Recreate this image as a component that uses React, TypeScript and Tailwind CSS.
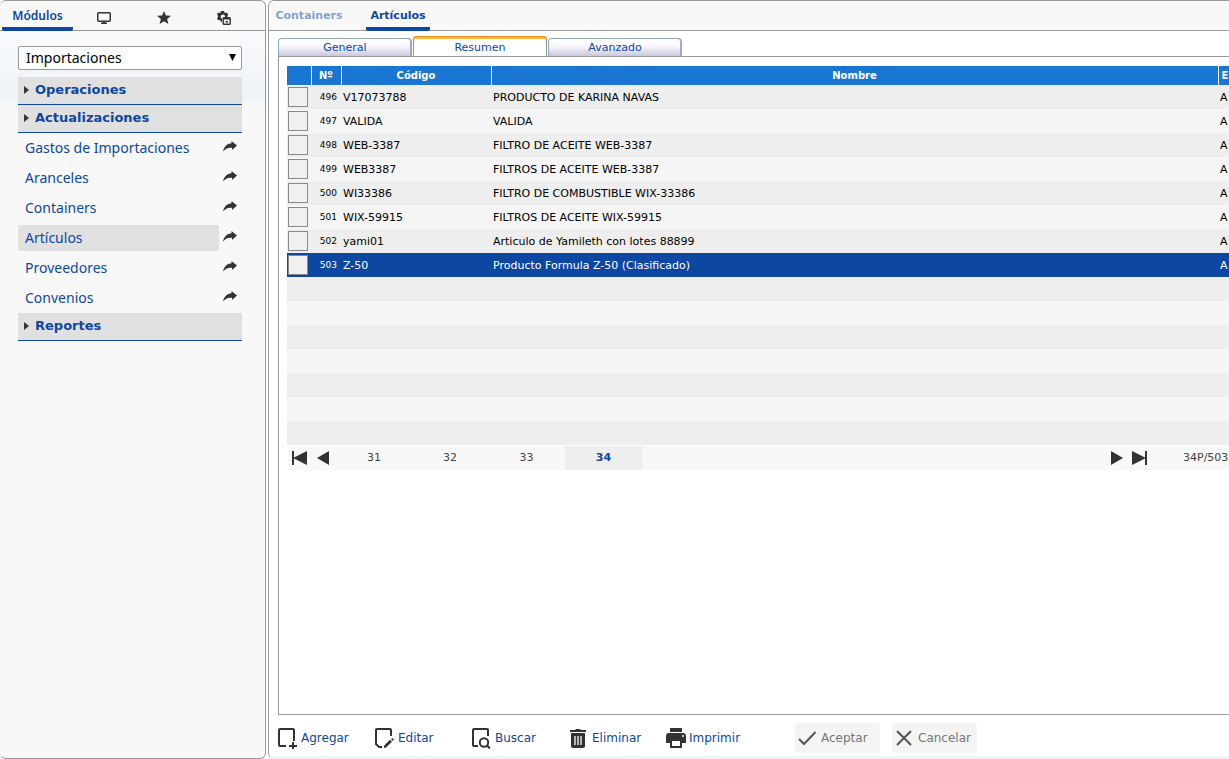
import React from "react";

const rows = [
  ["496", "V17073788", "PRODUCTO DE KARINA NAVAS"],
  ["497", "VALIDA", "VALIDA"],
  ["498", "WEB-3387", "FILTRO DE ACEITE WEB-3387"],
  ["499", "WEB3387", "FILTROS DE ACEITE WEB-3387"],
  ["500", "WI33386", "FILTRO DE COMBUSTIBLE WIX-33386"],
  ["501", "WIX-59915", "FILTROS DE ACEITE WIX-59915"],
  ["502", "yami01", "Articulo de Yamileth con lotes 88899"],
  ["503", "Z-50", "Producto Formula Z-50 (Clasificado)"],
];

const emptyRows = [0, 1, 2, 3, 4, 5, 6];

const links = ["Gastos de Importaciones", "Aranceles", "Containers", "Artículos", "Proveedores", "Convenios"];

function MonitorIcon() {
  return (
    <svg width="14" height="12" viewBox="0 0 14 12" aria-hidden="true">
      <rect x="0.75" y="0.75" width="12.5" height="8.5" rx="1" fill="none" stroke="#333" strokeWidth="1.5" />
      <path d="M6 9h2v1.5h2V12H4v-1.5h2z" fill="#333" />
    </svg>
  );
}

function StarIcon() {
  return (
    <svg width="14" height="13" viewBox="0 0 14 13" aria-hidden="true">
      <path d="M7 0l1.9 4.5L14 4.8 10.100 8 11.400 13 7 10.200 2.600 13 3.900 8 0 4.800l5.100-.3z" fill="#333" />
    </svg>
  );
}

function GearWindowIcon() {
  return (
    <svg width="14" height="14" viewBox="0 0 14 14" aria-hidden="true">
      <path
        fill="#333"
        fillRule="evenodd"
        d="M4 0h3l.4 1.5 1 .5 1.5-.5 1.4 2.4-.9 1v1H8V5.2A2.2 2.2 0 1 0 5 7.7V11H4l-.4-1.6-1-.5-1.5.4L0 7l1-1.1V4.8L0 3.8l1.1-2.3 1.5.5 1-.5z"
      />
      <rect x="6.2" y="6.7" width="7" height="6.500" rx="0.8" fill="#f8f8f8" stroke="#333" strokeWidth="1.4" />
      <path d="M6 6.500h7v2H6z" fill="#333" />
      <path d="M8.500 10h2.500v1.500H8.500z" fill="#333" />
    </svg>
  );
}

function ShareArrow() {
  return (
    <svg width="14" height="11" viewBox="0 0 14 11" aria-hidden="true">
      <path d="M8.500 0L14 4.500 9 9V6.800C5 6.300 2.500 7.500 0 10.500 1 5.500 4.500 2.500 8.500 2.300z" fill="#333" />
    </svg>
  );
}

function AddIcon() {
  return (
    <svg width="20" height="22" viewBox="0 0 20 22" fill="none" stroke="#333" strokeWidth="2" aria-hidden="true">
      <path d="M8 19H2a1 1 0 0 1-1-1V3a1 1 0 0 1 1-1h13a1 1 0 0 1 1 1v11M15 15v7M11 19h8" />
    </svg>
  );
}

function EditIcon() {
  return (
    <svg width="20" height="22" viewBox="0 0 20 22" fill="none" stroke="#333" strokeWidth="2" aria-hidden="true">
      <path d="M16 9V3a1 1 0 0 0-1-1H2a1 1 0 0 0-1 1v14l3 3h3" />
      <path d="M9 18.800L15 12.800l2 2L11 20.500 9 21z" fill="#333" stroke="none" />
      <path d="M16 12l1.200-1 1.800 1.800-1.200 1.200z" fill="#333" stroke="none" />
    </svg>
  );
}

function SearchIcon() {
  return (
    <svg width="20" height="22" viewBox="0 0 20 22" fill="none" stroke="#333" strokeWidth="2" aria-hidden="true">
      <path d="M6 19H2a1 1 0 0 1-1-1V3a1 1 0 0 1 1-1h13a1 1 0 0 1 1 1v6" />
      <circle cx="12" cy="15.500" r="4.200" />
      <path d="M15 18.500l3 3" />
    </svg>
  );
}

function TrashIcon() {
  return (
    <svg width="20" height="22" viewBox="0 0 20 22" aria-hidden="true">
      <path d="M1 3h5l1-1h4l1 1h5v2H1z" fill="#333" />
      <path d="M2 6h14v13a2 2 0 0 1-2 2H4a2 2 0 0 1-2-2z" fill="#333" />
      <path d="M6 9v9M9 9v9M12 9v9" stroke="#fff" strokeWidth="1.300" />
    </svg>
  );
}

function PrintIcon() {
  return (
    <svg width="20" height="22" viewBox="0 0 20 22" aria-hidden="true">
      <path d="M4 1h12v4H4zM3 6h14a3 3 0 0 1 3 3v7h-4v5H4v-5H0V9a3 3 0 0 1 3-3z" fill="#333" />
      <path d="M6 14h8v5H6z" fill="#fff" />
      <circle cx="17" cy="9" r="1" fill="#fff" />
    </svg>
  );
}

function CheckIcon() {
  return (
    <svg width="19" height="22" viewBox="0 0 19 22" fill="none" stroke="#555" strokeWidth="2" aria-hidden="true">
      <path d="M1 12l5 5L17.500 5" />
    </svg>
  );
}

function CrossIcon() {
  return (
    <svg width="19" height="22" viewBox="0 0 19 22" fill="none" stroke="#555" strokeWidth="2" aria-hidden="true">
      <path d="M2 4l14 14M16 4L2 18" />
    </svg>
  );
}

function ToolButton({ icon, label, disabled = false }: { icon: React.ReactNode; label: string; disabled?: boolean }) {
  return (
    <button
      disabled={disabled}
      className={
        disabled
          ? "flex h-[30px] w-[85px] items-center gap-1 rounded-sm bg-[#f4f4f4] pl-[3px] text-[12px] text-[#777]"
          : "flex h-[30px] w-[85px] items-center gap-[3px] text-[12px] text-[#0d47a1]"
      }
    >
      <span className="shrink-0">{icon}</span>
      {label}
    </button>
  );
}

function Section({ label }: { label: string }) {
  return (
    <button className="flex h-7 w-full items-center gap-[6px] border-b border-[#0d47a1] bg-[#e0e0e0] pb-px pl-[6px] text-left text-[13px] font-bold text-[#0d47a1]">
      <svg width="5" height="8" viewBox="0 0 5 8" aria-hidden="true">
        <path d="M0 0l5 4-5 4z" fill="#333" />
      </svg>
      {label}
    </button>
  );
}

function Sidebar() {
  return (
    <aside className="flex w-[266px] shrink-0 flex-col rounded-md border border-l-0 border-[#999] bg-[#f8f8f8]">
      <div className="flex h-[30px] border-b border-[#999] pl-[2px]">
        <button className="-mb-px w-[71px] rounded-b-xs border-b-4 border-[#0d47a1] pt-1 font-['Noto_Sans',sans-serif] text-[12px] font-semibold text-[#0d47a1]">
          Módulos
        </button>
        <button aria-label="Escritorio" className="ml-px flex w-[60px] items-center justify-center pt-1">
          <MonitorIcon />
        </button>
        <button aria-label="Favoritos" className="flex w-[60px] items-center justify-center pt-1">
          <StarIcon />
        </button>
        <button aria-label="Configuración" className="flex w-[60px] items-center justify-center pt-1">
          <GearWindowIcon />
        </button>
      </div>
      <div className="grow bg-[linear-gradient(#f9fafc,#eef3f8)] bg-[length:100%_70px] bg-no-repeat pt-[15px] pr-[23px] pl-[18px]">
        <label className="relative block">
          <span className="sr-only">Módulo</span>
          <select className="block h-6 w-full appearance-none rounded-xs border border-[#999] bg-white pl-[7px] font-['Noto_Sans',sans-serif] text-[14px] leading-[22px] text-black">
            <option>Importaciones</option>
          </select>
          <svg className="pointer-events-none absolute top-2 right-[6px]" width="7" height="7" viewBox="0 0 7 7" aria-hidden="true">
            <path d="M0 0h7L3.500 7z" fill="#000" />
          </svg>
        </label>
        <nav className="mt-[7px]">
          <Section label="Operaciones" />
          <Section label="Actualizaciones" />
          <ul>
            {links.map((l) => (
              <li key={l} className="flex h-[30px] items-center justify-between pr-[5px]">
                <a
                  href="#"
                  className={
                    l === "Artículos"
                      ? "h-[26px] w-[201px] rounded-xs bg-[#e0e0e0] pl-[7px] font-['Noto_Sans',sans-serif] text-[14px] leading-[26px] text-[#0d47a1]"
                      : "h-[26px] w-[201px] pl-[7px] font-['Noto_Sans',sans-serif] text-[14px] leading-[26px] text-[#0d47a1]"
                  }
                >
                  {l}
                </a>
                <button aria-label={"Abrir " + l} className="pb-1">
                  <ShareArrow />
                </button>
              </li>
            ))}
          </ul>
          <Section label="Reportes" />
        </nav>
      </div>
    </aside>
  );
}

function SubTab({ label }: { label: string }) {
  return (
    <button className="h-[18px] w-[134px] rounded-t-[4px] border border-b-0 border-[#91a7b4] bg-[linear-gradient(#fff_20%,#f3f1fa_50%,#c9c7dd)] pt-px text-[#0d47a1] shadow-[inset_-1px_0_#aaaac0]">
      {label}
    </button>
  );
}

function Grid() {
  return (
    <table className="w-full table-fixed border-collapse text-[11px]">
      <colgroup>
        <col className="w-6" />
        <col className="w-[30px]" />
        <col className="w-[150px]" />
        <col />
        <col className="w-[11px]" />
      </colgroup>
      <thead>
        <tr className="h-[19px] bg-[#1976d2] text-[10px] text-white">
          <th aria-label="Selección" className="p-0" />
          <th className="border-l border-white p-0">Nº</th>
          <th className="border-l border-white p-0">Código</th>
          <th className="border-l border-white p-0">Nombre</th>
          <th className="border-l border-white p-0 pl-[3px] text-left">E</th>
        </tr>
      </thead>
      <tbody>
        {rows.map(([n, code, name], i) => (
          <tr
            key={n}
            className={i === 7 ? "h-6 bg-[#0d47a1] text-white" : i % 2 ? "h-6 bg-[#f5f5f5] text-black" : "h-6 bg-[#eeeeee] text-black"}
          >
            <td className="p-0 pl-px">
              <input
                type="checkbox"
                aria-label={"Seleccionar " + n}
                className="block size-5 appearance-none border border-[#888] bg-[#f0f0f0]"
              />
            </td>
            <td className="p-0 pt-[2px] pr-1 text-right text-[9px]">{n}</td>
            <td className="p-0 pt-[2px] pl-[2px]">{code}</td>
            <td className="p-0 pt-[2px] pl-[2px]">{name}</td>
            <td className="p-0 pt-[2px] pl-[2px]">A</td>
          </tr>
        ))}
        {emptyRows.map((i) => (
          <tr key={i} className={i % 2 ? "h-6 bg-[#f5f5f5]" : "h-6 bg-[#eeeeee]"}>
            <td colSpan={5} className="p-0" />
          </tr>
        ))}
      </tbody>
    </table>
  );
}

function Pager() {
  return (
    <div className="mt-px ml-px flex h-6 items-center bg-[#f8f8f8] text-[11px] text-[#444]">
      <button aria-label="Primera página" className="pl-1">
        <svg width="16" height="14" viewBox="0 0 16 14" fill="#333" aria-hidden="true">
          <path d="M0 0h2v6.500L15 0v14L2 7.500V14H0z" />
        </svg>
      </button>
      <button aria-label="Página anterior" className="pl-2">
        <svg width="14" height="14" viewBox="0 0 14 14" fill="#333" aria-hidden="true">
          <path d="M13 0v14L1 7z" />
        </svg>
      </button>
      <div className="ml-[6px] flex h-6">
        <button className="w-[76px] pt-px">31</button>
        <button className="w-[76px] pt-px">32</button>
        <button className="w-[77px] pt-px">33</button>
        <button className="w-[77px] bg-[#eeeeee] pt-px font-bold text-[#0d47a1]">34</button>
      </div>
      <div className="ml-auto flex shrink-0 items-center">
        <button aria-label="Página siguiente">
          <svg width="14" height="14" viewBox="0 0 14 14" fill="#333" aria-hidden="true">
            <path d="M1 0v14l12-7z" />
          </svg>
        </button>
        <button aria-label="Última página" className="pl-2">
          <svg width="16" height="14" viewBox="0 0 16 14" fill="#333" aria-hidden="true">
            <path d="M0 0l13 6.500V0h2v14h-2V7.500L0 14z" />
          </svg>
        </button>
        <span className="box-content w-[46px] pl-[35px] whitespace-nowrap">34P/503R</span>
      </div>
    </div>
  );
}

export default function App() {
  return (
    <div className="flex min-h-screen gap-[2px] bg-white font-['DejaVu_Sans',Verdana,sans-serif]">
      <Sidebar />
      <main className="flex min-w-0 grow flex-col overflow-hidden rounded-l-md border border-r-0 border-b-0 border-[#999]">
        <div className="flex h-[30px] gap-[17px] border-b border-[#999] bg-[#f8f8f8] text-[11px] font-bold">
          <button className="w-20 pt-[2px] text-[#0d47a1]/50">Containers</button>
          <button className="-mb-px w-16 rounded-b-xs border-b-4 border-[#0d47a1] pt-[5px] text-[#0d47a1]">Artículos</button>
        </div>
        <div className="flex grow flex-col pl-[9px]">
          <div className="flex items-end gap-px pt-[6px] text-[11px]">
            <SubTab label="General" />
            <button className="-mb-px h-5 w-[134px] rounded-t-[3px] border-x border-t-2 border-[#919b9c] border-t-[#ffb92e] bg-white text-[#0d47a1] shadow-[0_-1px_#e68b2c]">
              Resumen
            </button>
            <SubTab label="Avanzado" />
          </div>
          <section className="grow border-y border-l border-[#999] pt-[9px] pl-2">
            <Grid />
            <Pager />
          </section>
          <div className="flex gap-3 pt-2 pb-[3px]">
            <ToolButton icon={<AddIcon />} label="Agregar" />
            <ToolButton icon={<EditIcon />} label="Editar" />
            <ToolButton icon={<SearchIcon />} label="Buscar" />
            <ToolButton icon={<TrashIcon />} label="Eliminar" />
            <ToolButton icon={<PrintIcon />} label="Imprimir" />
            <div className="ml-8 flex gap-3">
              <ToolButton icon={<CheckIcon />} label="Aceptar" disabled />
              <ToolButton icon={<CrossIcon />} label="Cancelar" disabled />
            </div>
          </div>
        </div>
        <div className="h-[3px] bg-[#eef3f8]" />
      </main>
    </div>
  );
}
